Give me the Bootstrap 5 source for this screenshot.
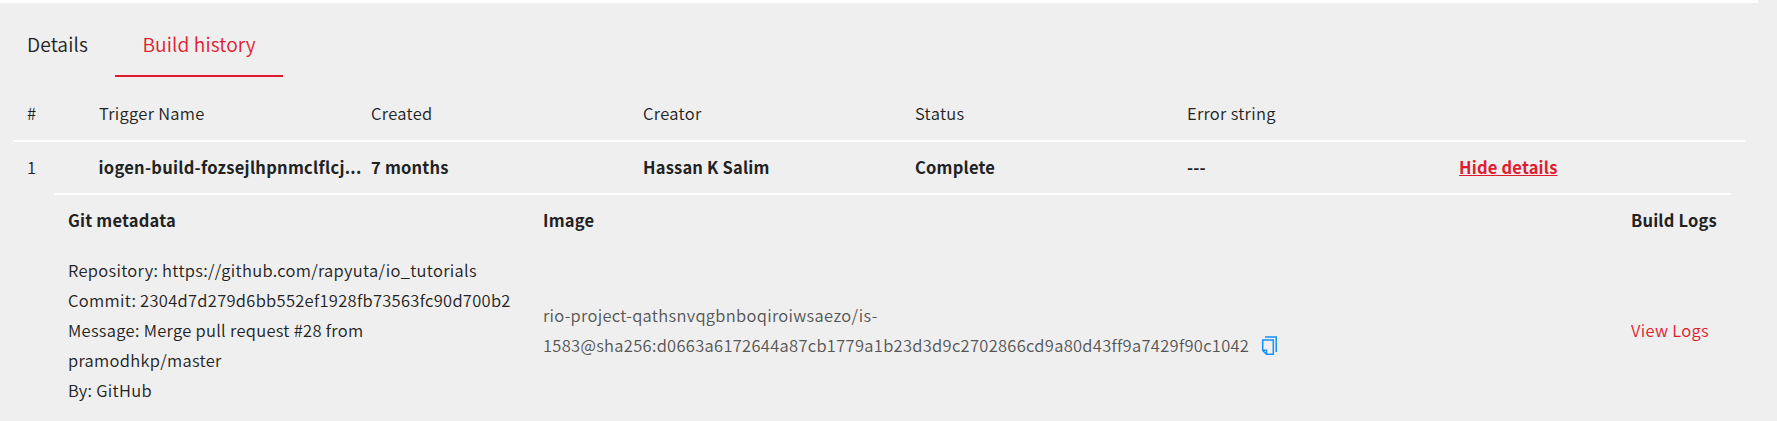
<!DOCTYPE html>
<html lang="en">
<head>
<meta charset="utf-8">
<title>Build history</title>
<link href="https://cdn.jsdelivr.net/npm/bootstrap@5.3.0/dist/css/bootstrap.min.css" rel="stylesheet">
<style>
body{background:#efefef;color:#222;font-family:"Source Sans Pro","Noto Sans CJK SC",sans-serif;font-size:16.5px;line-height:30px;font-weight:350;letter-spacing:.3px;height:421px;overflow:hidden}
.top-strip{height:3px;width:1758px;background:#fff}
.tabs{height:74px}
.tabs .nav-link{color:#222;font-size:19.2px;font-weight:350;letter-spacing:.1px;line-height:28px;padding:27px 27px 16px;border-bottom:2px solid transparent;border-radius:0;height:74px;white-space:nowrap}
.tabs .nav-link.active{color:#e11b2f;border-color:#e11b2f}
.tabs .tab-details{width:115px}
.tabs .tab-history{width:168px;padding-left:27.5px}
.builds{margin-left:13px;width:1732px}
.grid-row{display:grid;grid-template-columns:72px repeat(6,272px);padding-left:14px}
.grid-row>div{white-space:nowrap}
.head-row{height:65px;padding-top:21px;border-bottom:2px solid #fff}
.item-row{height:51px;padding-top:10px;font-weight:700}
.item-row,.details .title{letter-spacing:.2px}
.item-row .trigger{letter-spacing:.27px;margin-left:-.5px}
.row-index{font-weight:350}
.brand-red,.brand-red:hover{color:#e11b2f}
.details{margin-left:41px;width:1677px;border-top:2px solid #fff;padding:0 14px;display:grid;grid-template-columns:475px 1088px 1fr;grid-template-rows:60px 150px;white-space:nowrap}
.details .title{padding-top:10px;font-weight:700}
.image-name{color:#555}
</style>
</head>
<body>
<div class="top-strip"></div>
<nav class="nav tabs">
<a class="nav-link tab-details" href="#">Details</a>
<a class="nav-link active tab-history" href="#">Build history</a>
</nav>
<main class="builds">
<div class="grid-row head-row">
<div>#</div><div>Trigger Name</div><div>Created</div><div>Creator</div><div>Status</div><div>Error string</div><div></div>
</div>
<div class="grid-row item-row">
<div class="row-index">1</div><div class="trigger">iogen-build-fozsejlhpnmclflcj...</div><div>7 months</div><div>Hassan K Salim</div><div>Complete</div><div>---</div><div><a class="brand-red" href="#">Hide details</a></div>
</div>
<section class="details">
<div class="title">Git metadata</div><div class="title">Image</div><div class="title">Build Logs</div>
<div>Repository: https://github.com/rapyuta/io_tutorials<br>Commit: 2304d7d279d6bb552ef1928fb73563fc90d700b2<br>Message: Merge pull request #28 from<br>pramodhkp/master<br>By: GitHub</div>
<div class="image-name align-self-center">rio-project-qathsnvqgbnboqiroiwsaezo/is-<br><span class="d-inline-flex align-items-center">1583@sha256:d0663a6172644a87cb1779a1b23d3d9c2702866cd9a80d43ff9a7429f90c1042
<svg class="ms-2" width="24" height="24" viewBox="0 0 24 24" fill="none"><path d="M8 4h11.2v15" stroke="#1890ff" stroke-width="1.5"/><path d="M5.7 7h10.6v14.3H9.5L5.7 17.5zM5.7 17.3h3.8v4" stroke="#1890ff" stroke-width="1.5"/></svg></span></div>
<div class="align-self-center"><a class="brand-red text-decoration-none" href="#">View Logs</a></div>
</section>
</main>
<script src="https://cdn.jsdelivr.net/npm/bootstrap@5.3.0/dist/js/bootstrap.bundle.min.js"></script>
</body>
</html>
